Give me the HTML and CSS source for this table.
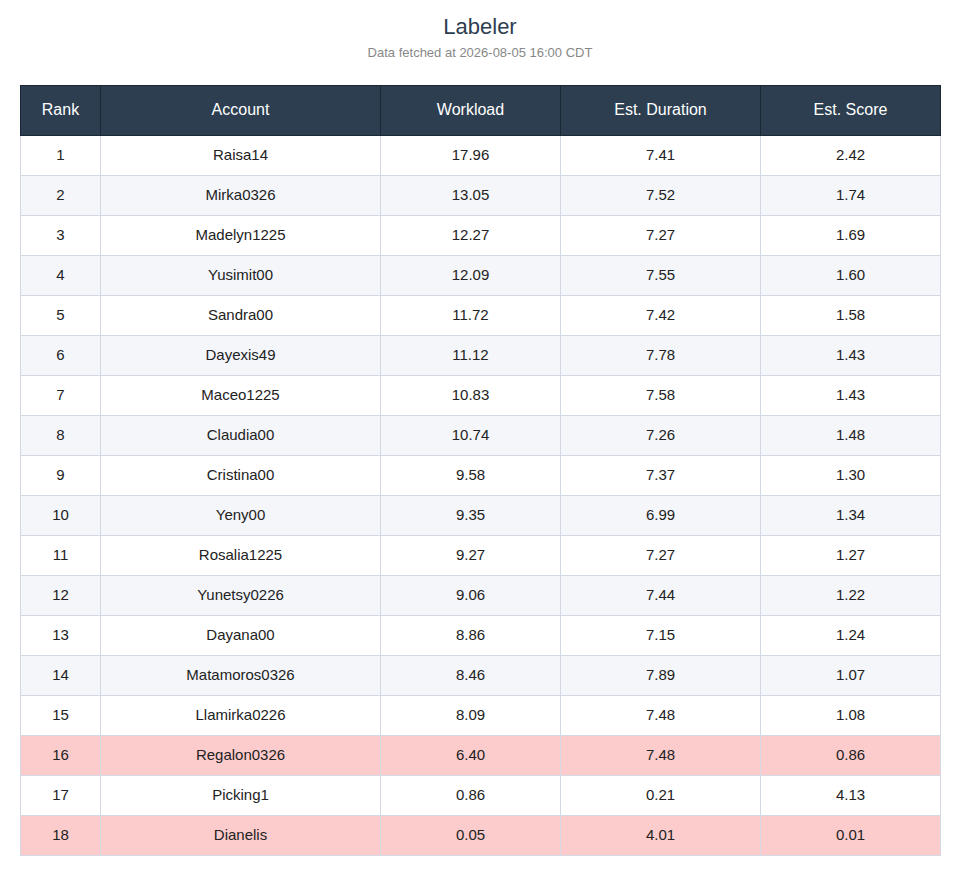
FILE: index.html
```html
<!DOCTYPE html>
<html>
<head>
<meta charset="utf-8">
<link rel="stylesheet" href="styles.css">
</head>
<body>
<div class="page">
  <header class="head">
    <h1 class="title">Labeler</h1>
    <p class="sub">Data fetched at 2026-08-05 16:00 CDT</p>
  </header>
  <table class="board">
    <colgroup>
      <col class="c-rank"><col class="c-acct"><col class="c-work"><col class="c-dur"><col class="c-score">
    </colgroup>
    <thead>
      <tr><th>Rank</th><th>Account</th><th>Workload</th><th>Est. Duration</th><th>Est. Score</th></tr>
    </thead>
    <tbody>
      <tr><td>1</td><td>Raisa14</td><td>17.96</td><td>7.41</td><td>2.42</td></tr>
      <tr class="alt"><td>2</td><td>Mirka0326</td><td>13.05</td><td>7.52</td><td>1.74</td></tr>
      <tr><td>3</td><td>Madelyn1225</td><td>12.27</td><td>7.27</td><td>1.69</td></tr>
      <tr class="alt"><td>4</td><td>Yusimit00</td><td>12.09</td><td>7.55</td><td>1.60</td></tr>
      <tr><td>5</td><td>Sandra00</td><td>11.72</td><td>7.42</td><td>1.58</td></tr>
      <tr class="alt"><td>6</td><td>Dayexis49</td><td>11.12</td><td>7.78</td><td>1.43</td></tr>
      <tr><td>7</td><td>Maceo1225</td><td>10.83</td><td>7.58</td><td>1.43</td></tr>
      <tr class="alt"><td>8</td><td>Claudia00</td><td>10.74</td><td>7.26</td><td>1.48</td></tr>
      <tr><td>9</td><td>Cristina00</td><td>9.58</td><td>7.37</td><td>1.30</td></tr>
      <tr class="alt"><td>10</td><td>Yeny00</td><td>9.35</td><td>6.99</td><td>1.34</td></tr>
      <tr><td>11</td><td>Rosalia1225</td><td>9.27</td><td>7.27</td><td>1.27</td></tr>
      <tr class="alt"><td>12</td><td>Yunetsy0226</td><td>9.06</td><td>7.44</td><td>1.22</td></tr>
      <tr><td>13</td><td>Dayana00</td><td>8.86</td><td>7.15</td><td>1.24</td></tr>
      <tr class="alt"><td>14</td><td>Matamoros0326</td><td>8.46</td><td>7.89</td><td>1.07</td></tr>
      <tr><td>15</td><td>Llamirka0226</td><td>8.09</td><td>7.48</td><td>1.08</td></tr>
      <tr class="low"><td>16</td><td>Regalon0326</td><td>6.40</td><td>7.48</td><td>0.86</td></tr>
      <tr><td>17</td><td>Picking1</td><td>0.86</td><td>0.21</td><td>4.13</td></tr>
      <tr class="low"><td>18</td><td>Dianelis</td><td>0.05</td><td>4.01</td><td>0.01</td></tr>
    </tbody>
  </table>
</div>
</body>
</html>
```
FILE: styles.css
```css
html, body {
  margin: 0;
  padding: 0;
  background: #ffffff;
}
body {
  font-family: "Liberation Sans", Arial, sans-serif;
  color: #222;
}
.page {
  padding: 13px 20px 20px;
}
.head {
  text-align: center;
}
.title {
  margin: 0;
  font-size: 22px;
  font-weight: normal;
  line-height: 28px;
  color: #2c3e50;
}
.sub {
  margin: 4px 0 0;
  font-size: 13px;
  line-height: 16px;
  color: #888888;
}
.board {
  margin-top: 24px;
  width: 920px;
  border-collapse: collapse;
  table-layout: fixed;
}
.c-rank { width: 80px; }
.c-acct { width: 280px; }
.c-work { width: 180px; }
.c-dur { width: 200px; }
.c-score { width: 180px; }
.board th {
  background: #2c3e50;
  color: #ffffff;
  font-weight: normal;
  font-size: 16px;
  line-height: 19px;
  height: 50px;
  box-sizing: border-box;
  padding: 0 0 2px;
  border: 1px solid #1b2733;
  text-align: center;
}
.board td {
  height: 40px;
  box-sizing: border-box;
  padding: 0 0 1px;
  font-size: 15px;
  line-height: 18px;
  color: #222;
  text-align: center;
  border: 1px solid #d3d9e3;
}
.board tr.alt td {
  background: #f4f6fa;
}
.board tr.low td {
  background: #fccbcb;
}
```
